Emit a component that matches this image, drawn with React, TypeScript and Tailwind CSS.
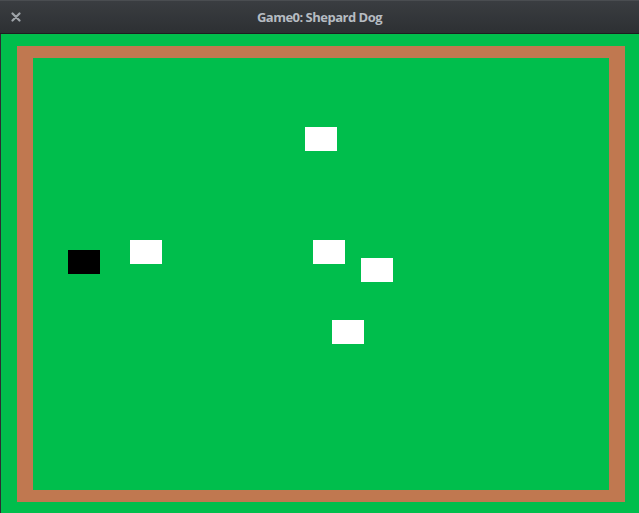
import React from 'react';

type Sprite = { x: number; y: number; dog?: boolean };

// positions inside the inner field (576x432)
const sprites: Sprite[] = [
  { x: 35, y: 192, dog: true },
  { x: 97, y: 182 },
  { x: 272, y: 69 },
  { x: 280, y: 182 },
  { x: 328, y: 200 },
  { x: 299, y: 262 },
];

const App: React.FC = () => {
  return (
    <div className="w-[639px] h-[513px] overflow-hidden flex flex-col bg-[#00be4c]">
      {/* title bar */}
      <div className="h-[34px] shrink-0 flex items-center relative bg-gradient-to-b from-[#3a3d41] to-[#2d3033] border-t border-[#4a4d51] border-b border-b-[#1c1e20]">
        <div className="w-[32px] flex justify-center text-[#9ea3a8]">
          <svg width="10" height="10" viewBox="0 0 10 10">
            <path d="M1.5 1.5 L8.5 8.5 M8.5 1.5 L1.5 8.5" stroke="currentColor" strokeWidth="2.2" strokeLinecap="round" />
          </svg>
        </div>
        <div
          className="flex-1 text-center pr-[32px] text-[13px] font-bold tracking-[-0.5px] text-[#b6bcc2] leading-none"
          style={{ fontFamily: '"Open Sans", "Noto Sans", sans-serif' }}
        >
          Game0: Shepard Dog
        </div>
      </div>

      {/* game canvas */}
      <div className="flex flex-1">
        <div className="w-[1px] bg-[#2b2e31] shrink-0" />
        <div className="flex-1 pt-[12px] pl-[16px]">
          <div className="w-[608px] h-[456px] bg-[#c07850] pt-[12px] pl-[16px]">
            <div className="w-[576px] h-[432px] bg-[#00be4c] relative">
              {sprites.map((s, i) => (
                <div
                  key={i}
                  className={`absolute w-[32px] h-[24px] ${s.dog ? 'bg-black' : 'bg-white'}`}
                  style={{ left: s.x, top: s.y }}
                />
              ))}
            </div>
          </div>
        </div>
      </div>
    </div>
  );
};

export default App;
